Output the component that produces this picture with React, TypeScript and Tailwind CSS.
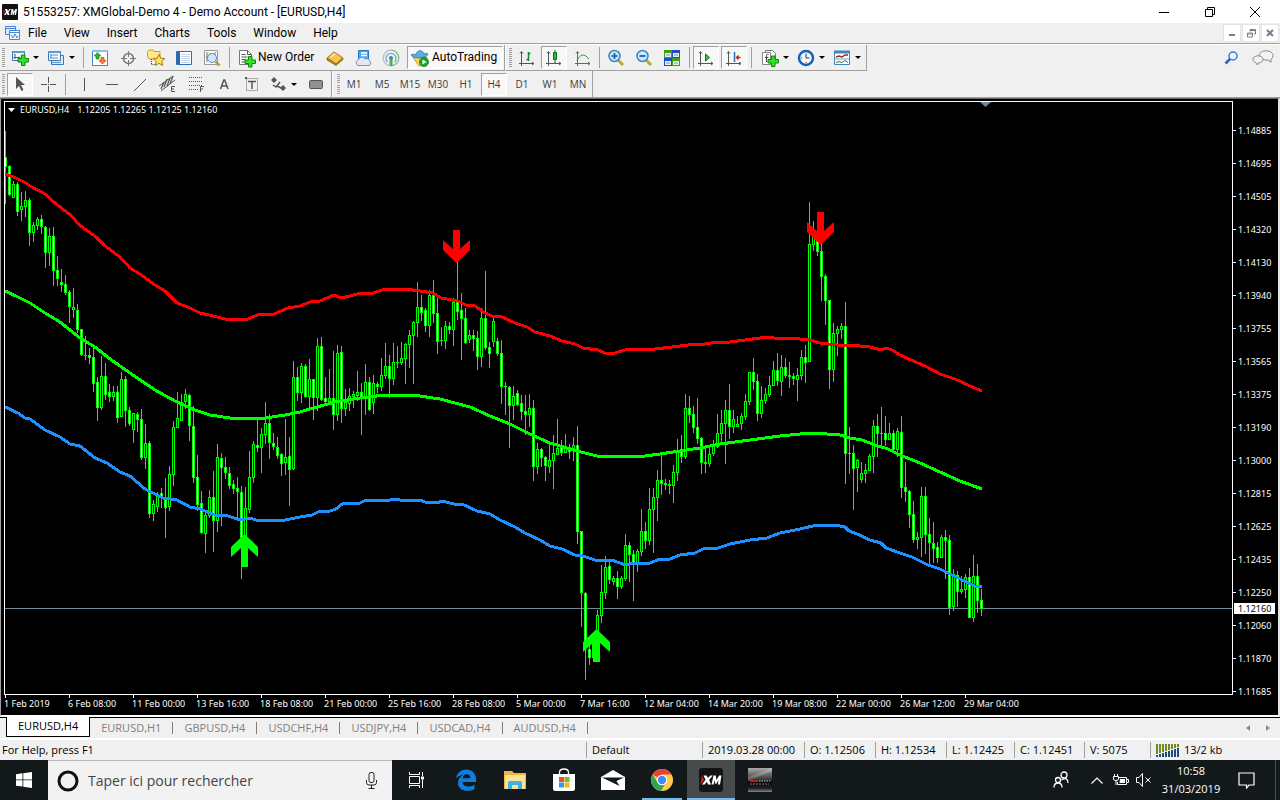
import type { ReactNode } from "react";

type Candle = [high: number, top: number, bottom: number, low: number, bear?: 1];
type Point = [number, number];

// one candle every 4px, starting at x = 5
const candles: Candle[] = [
  [131, 157, 166, 203, 1], [165, 166, 194, 195, 1], [181, 184, 197, 197], [182, 184, 211, 215, 1], [192, 206, 209, 220],
  [191, 200, 206, 216], [198, 200, 232, 245, 1], [222, 225, 232, 241], [217, 219, 225, 229], [215, 219, 226, 233, 1],
  [226, 227, 252, 267, 1], [228, 236, 252, 265], [227, 236, 270, 285, 1], [256, 270, 278, 285, 1], [269, 282, 284, 291, 1],
  [275, 284, 292, 294, 1], [290, 292, 306, 322, 1], [288, 307, 309, 317], [304, 310, 329, 332, 1], [329, 329, 354, 355, 1],
  [336, 355, 355, 359], [348, 355, 357, 363, 1], [346, 357, 383, 391, 1], [377, 382, 407, 420, 1], [356, 376, 407, 409],
  [363, 376, 394, 399, 1], [384, 392, 396, 401, 1], [386, 392, 396, 400], [386, 392, 417, 422, 1], [372, 379, 416, 416],
  [376, 379, 410, 426, 1], [407, 410, 423, 425, 1], [413, 413, 429, 442], [412, 414, 419, 431, 1], [409, 419, 457, 459, 1],
  [424, 443, 457, 468], [441, 443, 513, 517, 1], [500, 504, 513, 520], [492, 494, 506, 511], [488, 493, 497, 507, 1],
  [478, 498, 507, 537, 1], [466, 474, 506, 510], [421, 427, 474, 485], [392, 418, 427, 427], [394, 402, 420, 420],
  [389, 394, 401, 408], [394, 395, 425, 440, 1], [406, 426, 477, 482, 1], [455, 477, 504, 510, 1], [491, 503, 532, 533, 1],
  [510, 515, 533, 552], [490, 497, 515, 517], [471, 497, 520, 551, 1], [444, 457, 520, 531], [453, 458, 467, 525, 1],
  [457, 467, 472, 478, 1], [467, 473, 485, 488, 1], [480, 484, 488, 493, 1], [477, 488, 491, 520, 1], [486, 492, 537, 578, 1],
  [487, 508, 537, 545], [451, 477, 509, 512], [441, 444, 477, 482], [420, 445, 447, 451, 1], [428, 434, 447, 472],
  [402, 423, 434, 443], [414, 423, 442, 458, 1], [433, 443, 446, 449, 1], [437, 447, 455, 458, 1], [453, 454, 463, 475, 1],
  [419, 457, 462, 474], [437, 456, 469, 505, 1], [361, 377, 468, 469], [367, 377, 392, 400, 1], [363, 366, 392, 402],
  [364, 366, 396, 397, 1], [359, 379, 396, 407], [379, 379, 397, 419, 1], [338, 346, 397, 410], [337, 346, 399, 400, 1],
  [377, 398, 401, 405, 1], [369, 398, 401, 401], [351, 398, 414, 429, 1], [345, 353, 414, 420], [346, 352, 408, 422, 1],
  [389, 402, 408, 415], [388, 396, 403, 410], [391, 394, 396, 407], [371, 392, 395, 400], [383, 392, 398, 434, 1],
  [364, 382, 397, 414], [377, 382, 409, 410, 1], [375, 383, 402, 413], [382, 384, 386, 392, 1], [358, 375, 386, 390],
  [343, 366, 375, 378], [355, 366, 378, 397, 1], [343, 362, 378, 384], [346, 362, 362, 367], [342, 358, 362, 364],
  [343, 344, 358, 383], [330, 335, 344, 367], [321, 322, 335, 383], [282, 307, 322, 336], [295, 307, 312, 320, 1],
  [308, 310, 325, 331, 1], [290, 295, 325, 336], [280, 295, 313, 322, 1], [297, 313, 341, 353, 1], [327, 340, 340, 345],
  [321, 326, 340, 348], [322, 326, 329, 333, 1], [298, 302, 329, 345], [262, 302, 311, 319, 1], [293, 310, 318, 359, 1],
  [308, 318, 342, 343, 1], [330, 335, 339, 342], [330, 335, 338, 350, 1], [331, 338, 356, 369, 1], [308, 318, 356, 366],
  [271, 318, 347, 349, 1], [342, 347, 353, 367, 1], [318, 321, 341, 346], [338, 341, 353, 355, 1], [340, 353, 386, 403, 1],
  [382, 386, 386, 414], [386, 387, 405, 447, 1], [386, 396, 405, 419], [390, 393, 404, 405, 1], [395, 403, 411, 419, 1],
  [395, 411, 414, 434, 1], [394, 408, 414, 426], [400, 408, 466, 480, 1], [443, 449, 466, 473], [448, 449, 457, 466, 1],
  [456, 457, 465, 480, 1], [443, 460, 466, 472], [435, 453, 460, 488], [419, 448, 454, 454], [440, 447, 452, 455, 1],
  [434, 447, 452, 452], [444, 447, 451, 458, 1], [437, 445, 450, 460], [426, 445, 531, 543, 1], [531, 531, 592, 626, 1],
  [592, 593, 640, 679, 1], [645, 649, 657, 664, 1], [640, 642, 657, 658], [610, 615, 632, 642], [565, 592, 615, 622],
  [556, 567, 592, 598], [562, 566, 579, 583, 1], [576, 578, 581, 584], [571, 578, 586, 598, 1], [576, 578, 586, 588],
  [534, 545, 578, 580], [542, 545, 554, 581, 1], [550, 554, 563, 600, 1], [549, 551, 563, 571], [509, 531, 551, 555],
  [522, 531, 540, 548, 1], [488, 509, 540, 544], [488, 497, 509, 552], [470, 480, 497, 520], [455, 480, 483, 494, 1],
  [479, 483, 484, 489], [480, 484, 485, 493], [465, 472, 485, 502], [439, 450, 472, 480], [435, 449, 456, 462, 1],
  [394, 408, 456, 458], [396, 408, 414, 422, 1], [406, 414, 427, 432, 1], [398, 427, 438, 443, 1], [437, 438, 462, 473, 1],
  [446, 462, 463, 472], [447, 454, 463, 466], [440, 446, 453, 455], [414, 433, 446, 447], [410, 423, 433, 441],
  [400, 410, 423, 463], [384, 410, 426, 438, 1], [410, 419, 426, 432], [416, 424, 426, 426], [413, 416, 423, 429],
  [394, 401, 416, 419], [372, 372, 401, 404], [358, 372, 381, 389, 1], [374, 381, 413, 420, 1], [386, 400, 413, 417],
  [388, 394, 400, 403], [376, 385, 394, 396], [361, 370, 385, 385], [353, 370, 380, 385, 1], [355, 367, 381, 395],
  [358, 367, 375, 377, 1], [362, 375, 376, 387], [373, 376, 378, 384, 1], [368, 375, 379, 400], [350, 357, 375, 379],
  [345, 357, 362, 382, 1], [202, 244, 361, 361], [221, 237, 244, 250], [232, 241, 251, 255, 1], [240, 251, 276, 300, 1],
  [274, 276, 300, 324, 1], [300, 300, 369, 388, 1], [323, 333, 369, 381], [326, 329, 333, 355], [323, 326, 329, 338],
  [302, 326, 453, 483, 1], [427, 453, 453, 473], [445, 453, 468, 509, 1], [459, 460, 467, 491], [462, 473, 479, 482],
  [464, 470, 473, 482], [454, 456, 470, 470], [420, 426, 456, 472], [414, 426, 433, 456, 1], [407, 433, 433, 447],
  [416, 433, 439, 445, 1], [423, 433, 439, 439], [430, 433, 449, 450, 1], [428, 431, 449, 456], [416, 432, 487, 497, 1],
  [462, 487, 491, 501, 1], [490, 491, 514, 527, 1], [501, 514, 539, 542, 1], [532, 537, 539, 548], [487, 496, 537, 556],
  [487, 496, 534, 553, 1], [518, 534, 542, 564, 1], [522, 543, 548, 562, 1], [542, 547, 557, 562, 1], [535, 537, 557, 557],
  [530, 537, 540, 578, 1], [535, 540, 607, 614, 1], [569, 574, 606, 610], [571, 575, 591, 606, 1], [576, 589, 591, 593],
  [574, 577, 589, 597], [568, 577, 617, 617, 1], [555, 576, 617, 621], [564, 576, 600, 612, 1], [589, 600, 608, 615, 1],
];

const upperBand: Point[] = [
  [5, 174], [16, 178], [26, 183], [30, 186], [45, 194], [55, 203], [73, 217], [78, 224], [96, 237], [105, 246], [120, 257],
  [130, 268], [140, 274], [155, 285], [165, 291], [177, 303], [190, 308], [200, 313], [213, 316], [225, 319], [248, 319],
  [260, 314], [274, 314], [288, 308], [300, 306], [310, 302], [320, 301], [334, 295], [341, 298], [350, 296], [361, 293],
  [370, 294], [385, 289], [400, 290], [405, 289], [420, 291], [433, 293], [441, 298], [458, 301], [466, 305], [475, 306],
  [485, 313], [492, 316], [500, 316], [515, 323], [527, 327], [535, 332], [550, 336], [562, 341], [575, 344], [583, 348],
  [598, 350], [605, 353], [615, 353], [625, 350], [640, 349], [655, 349], [672, 347], [688, 345], [705, 344], [717, 342],
  [730, 342], [745, 340], [768, 337], [780, 339], [790, 338], [810, 340], [820, 343], [845, 346], [850, 345], [870, 347],
  [881, 350], [886, 348], [892, 350], [900, 355], [911, 360], [925, 366], [940, 374], [955, 379], [970, 386], [982, 391],
];
const middleBand: Point[] = [
  [5, 291], [16, 296], [30, 303], [45, 313], [60, 322], [80, 338], [95, 347], [110, 359], [130, 373], [155, 390], [175, 401],
  [195, 410], [210, 415], [230, 418], [250, 419], [265, 418], [285, 415], [300, 412], [310, 409], [335, 402], [360, 398],
  [385, 395], [413, 395], [440, 399], [455, 403], [470, 407], [490, 416], [510, 424], [530, 434], [550, 443], [577, 451],
  [597, 456], [620, 457], [645, 456], [660, 454], [680, 451], [700, 448], [720, 444], [750, 440], [780, 436], [800, 434],
  [814, 433], [840, 435], [850, 438], [862, 440], [875, 445], [888, 449], [900, 455], [920, 463], [940, 472], [960, 481],
  [982, 489],
];
const lowerBand: Point[] = [
  [5, 407], [18, 413], [25, 418], [30, 419], [45, 430], [60, 437], [70, 444], [80, 446], [95, 458], [107, 463], [120, 472],
  [130, 476], [145, 489], [163, 498], [177, 500], [190, 507], [200, 509], [215, 515], [228, 516], [240, 520], [250, 518],
  [259, 521], [285, 520], [300, 517], [312, 515], [320, 511], [330, 511], [336, 509], [342, 504], [360, 503], [366, 500],
  [385, 501], [395, 499], [405, 501], [420, 500], [425, 502], [437, 503], [442, 501], [458, 505], [462, 504], [477, 511],
  [490, 514], [500, 520], [515, 527], [525, 533], [540, 540], [550, 546], [562, 549], [575, 555], [583, 556], [595, 560],
  [612, 560], [625, 565], [635, 563], [642, 564], [650, 563], [660, 559], [670, 559], [680, 555], [695, 553], [703, 549],
  [718, 548], [730, 544], [750, 540], [767, 538], [780, 533], [800, 529], [817, 525], [840, 526], [845, 527], [849, 531],
  [857, 534], [870, 540], [881, 543], [886, 548], [900, 553], [912, 557], [928, 565], [940, 569], [960, 579], [975, 586],
  [982, 587],
];

const prices = [
  "1.14885", "1.14695", "1.14505", "1.14320", "1.14130", "1.13940", "1.13755", "1.13565", "1.13375",
  "1.13190", "1.13000", "1.12815", "1.12625", "1.12435", "1.12250", "1.12060", "1.11870", "1.11685",
];
const times = [
  "1 Feb 2019", "6 Feb 08:00", "11 Feb 00:00", "13 Feb 16:00", "18 Feb 08:00", "21 Feb 00:00", "25 Feb 16:00", "28 Feb 08:00",
  "5 Mar 00:00", "7 Mar 16:00", "12 Mar 04:00", "14 Mar 20:00", "19 Mar 08:00", "22 Mar 00:00", "26 Mar 12:00", "29 Mar 04:00",
];
const menus = ["File", "View", "Insert", "Charts", "Tools", "Window", "Help"];
const timeframes = ["M1", "M5", "M15", "M30", "H1", "H4", "D1", "W1", "MN"];
const tabs = ["EURUSD,H4", "EURUSD,H1", "GBPUSD,H4", "USDCHF,H4", "USDJPY,H4", "USDCAD,H4", "AUDUSD,H4"];

function Svg({ children, size = 20 }: { children: ReactNode; size?: number }) {
  return (
    <svg width={size} height={size} viewBox="0 0 20 20" fill="none" className="shrink-0" aria-hidden="true">
      {children}
    </svg>
  );
}

function Caret() {
  return (
    <svg width="6" height="3" viewBox="0 0 6 3" aria-hidden="true">
      <path d="M0 0h6L3 3z" fill="#000" />
    </svg>
  );
}

function Plus({ x, y }: { x: number; y: number }) {
  return (
    <path
      transform={`translate(${x} ${y})`}
      d="M4 .5h3.500V4H11v3.500H7.500V11H4V7.500H.5V4H4z"
      fill="#35e02c"
      stroke="#078a07"
    />
  );
}

function Tool({ label, pressed, children }: { label: string; pressed?: boolean; children: ReactNode }) {
  return (
    <button aria-label={label} className="flex h-6 w-7 items-center justify-center">
      <span
        className={
          pressed
            ? "flex h-[23px] w-[26px] items-center justify-center border border-t-[#a0a0a0] border-l-[#a0a0a0] border-r-white border-b-white bg-[#f8f8f8]"
            : "flex items-center justify-center"
        }
      >
        {children}
      </span>
    </button>
  );
}

function DropTool({ label, children }: { label: string; children: ReactNode }) {
  return (
    <button aria-label={label} className="flex h-6 w-9 items-center">
      <span className="flex w-6 justify-center">{children}</span>
      <span className="flex w-2 justify-center">
        <Caret />
      </span>
    </button>
  );
}

const Sep = () => (
  <span className="flex h-[21px] w-1.5 justify-center">
    <span className="w-px bg-[#a0a0a0]" />
  </span>
);

const Grip = () => (
  <span className="flex h-5 w-[3px] flex-col justify-between">
    {Array.from({ length: 10 }, (_, i) => (
      <span key={i} className="h-px bg-[#a0a0a0]" />
    ))}
  </span>
);

function TitleBar() {
  return (
    <header className="flex h-[23px] shrink-0 items-center bg-white pl-[2px] font-[Roboto,sans-serif] text-[12px] text-black">
      <svg width="16" height="16" viewBox="0 0 16 16" aria-hidden="true">
        <rect width="16" height="16" rx="1" fill="#111" />
        <path d="M2 11l2-3-1-3h2l1 2 1.500-2H9L6.500 8l1 3h-2l-.7-1.700L3.500 11zM8.500 11l1-6h1.700l.6 3 1.600-3H15l-1 6h-1.300l.5-3.500L11.500 11h-.8L10 7.500 9.700 11z" fill="#fff" />
        <path d="M1 10.500L3 8 2 5.500z" fill="#e11" />
      </svg>
      <h1 className="ml-[5px]">51553257: XMGlobal-Demo 4 - Demo Account - [EURUSD,H4]</h1>
      <div className="ml-auto flex h-full pr-0.5">
        <button aria-label="Minimize" className="flex w-[46px] items-center justify-center">
          <svg width="10" height="10"><path d="M0 5.500h10" stroke="#000" /></svg>
        </button>
        <button aria-label="Restore" className="flex w-[45px] items-center justify-center">
          <svg width="10" height="10" fill="none" stroke="#000"><path d="M.5 2.500h7v7h-7zM2.500 2.500v-2h7v7h-2" /></svg>
        </button>
        <button aria-label="Close" className="flex w-[46px] items-center justify-center">
          <svg width="10" height="10" stroke="#000"><path d="M0 0l10 10M10 0L0 10" /></svg>
        </button>
      </div>
    </header>
  );
}

function MenuBar() {
  return (
    <nav className="flex h-[21px] shrink-0 items-center border-b border-[#a0a0a0] bg-[#f0f0f0] pl-[5px] font-[Roboto,sans-serif] text-[12px] text-black">
      <svg width="15" height="14" viewBox="0 0 15 14" fill="none" stroke="#4a83d8" aria-hidden="true">
        <path d="M.5.5h10v8H.5zM.5 2.500h10" fill="#dfeafc" />
        <path d="M4.500 4.500h10v9h-10z" fill="#f4f8ff" />
        <path d="M4.500 6.500h10M6 9l2 3 2-4 2 4 1-2" />
      </svg>
      <div className="ml-2 flex gap-[17px]">
        {menus.map((m) => (
          <button key={m}>{m}</button>
        ))}
      </div>
      <div className="ml-auto flex gap-px pr-px text-[#708090]">
        <button aria-label="Minimize chart" className="flex h-[18px] w-[18px] items-center justify-center border border-[#e3e3e3] bg-white">
          <svg width="8" height="8"><path d="M1 6h6" stroke="currentColor" strokeWidth="2" /></svg>
        </button>
        <button aria-label="Restore chart" className="flex h-[18px] w-[18px] items-center justify-center border border-[#e3e3e3] bg-white">
          <svg width="9" height="9" fill="none" stroke="currentColor"><path d="M.5 4h5v4h-5zM.5 5h5M3 2.500V.5h5.500v4.500H7M3 1.500h5.500" /></svg>
        </button>
        <button aria-label="Close chart" className="flex h-[18px] w-[18px] items-center justify-center border border-[#e3e3e3] bg-white">
          <svg width="8" height="8"><path d="M1 1l6 6M7 1L1 7" stroke="currentColor" strokeWidth="2" /></svg>
        </button>
      </div>
    </nav>
  );
}

function StandardToolbar() {
  return (
    <div className="flex h-[27px] shrink-0 items-center border-t border-white bg-[#f0f0f0] font-[Roboto,sans-serif] text-[12px] text-black">
      <div className="flex h-full items-center border-r border-b border-[#a0a0a0] pl-0.5">
        <Grip />
        <span className="w-[3px]" />
        <DropTool label="New chart">
          <Svg>
            <path d="M2.500 3.500h12v9h-12z" fill="#f3f8ff" stroke="#3a78b8" />
            <path d="M2.500 3h12v2h-12z" fill="#5a9ad0" />
            <path d="M5 6v5M3.500 9.500h6M5 6l-1 1M9 8.500l1 1-1 1" stroke="#557" />
            <Plus x={7.5} y={6.5} />
          </Svg>
        </DropTool>
        <DropTool label="Profiles">
          <Svg>
            <path d="M5.500 7.500h12v9h-12z" fill="#dcebfb" stroke="#3a78b8" />
            <path d="M2.500 3.500h12v9h-12z" fill="#f3f8ff" stroke="#3a78b8" />
            <path d="M2 3h13v2H2z" fill="#5a9ad0" />
            <path d="M4 7h8M4 10h8M5 6v5M6 14.500h9" stroke="#6b8fb5" />
          </Svg>
        </DropTool>
        <Sep />
        <Tool label="Market Watch">
          <Svg>
            <path d="M2.500 2.500h15v15h-15z" fill="#fff" stroke="#3b8bd0" />
            <path d="M2 3h16" stroke="#8cc0ea" strokeWidth="2" />
            <path d="M4 8l3.500-3.500L11 8H9v3H6V8z" fill="#2fb52f" stroke="#117a11" strokeWidth=".6" />
            <path d="M9 12.500l3.500 3.500 3.500-3.500-2-.2V9.500h-3v2.800z" fill="#ff7b38" stroke="#c13900" strokeWidth=".7" />
          </Svg>
        </Tool>
        <Tool label="Data Window">
          <Svg>
            <circle cx="10.500" cy="10.500" r="5" stroke="#777" strokeWidth="1.500" />
            <path d="M10.500 3v6M10.500 12v6M3 10.500h6M12 10.500h6" stroke="#777" />
          </Svg>
        </Tool>
        <Tool label="Navigator">
          <Svg>
            <path d="M1.500 8V3.500L3 2h4l1 1.500h6V11H3z" fill="#ffe78a" stroke="#cf9f1c" />
            <path d="M5.500 11v6M5.500 16.500h3" stroke="#444" strokeDasharray="1 1" />
            <path d="M13 6.500l1.700 3.700 4.100.4-3 2.800.9 4.100-3.700-2.100-3.700 2.100.9-4.100-3-2.800 4.100-.4z" fill="#ffe25c" stroke="#a9791b" />
          </Svg>
        </Tool>
        <Tool label="Terminal">
          <Svg>
            <path d="M2.500 3.500h15v13h-15z" fill="#fff" stroke="#2870b4" />
            <path d="M4.500 4v12" stroke="#2f65b0" strokeWidth="3" />
            <path d="M7 6.500h9M7 8.500h9M7 10.500h9M7 12.500h9M7 14.500h9" stroke="#c3d6ec" />
          </Svg>
        </Tool>
        <Tool label="Strategy Tester">
          <Svg>
            <path d="M2.500 2.500h13v14h-13z" fill="#fafafa" stroke="#999" />
            <path d="M5 4v10M8 5v3M13 4v4M4 9h3" stroke="#777" />
            <circle cx="10" cy="10" r="4.500" fill="#cbe6fb" fillOpacity=".85" stroke="#5794cc" />
            <path d="M13.500 13.500l4 4" stroke="#c99824" strokeWidth="2.500" />
          </Svg>
        </Tool>
        <Sep />
        <button className="ml-1 flex w-[85px] items-center gap-0.5">
          <Svg>
            <path d="M3.500 2.500h8l4 4v10h-12z" fill="#fff" stroke="#777" />
            <path d="M11.500 2.500v4h4M5.500 6.500h4M5.500 9h6M5.500 11.500h4M5.500 14h4" stroke="#555" />
            <Plus x={8.5} y={8} />
          </Svg>
          <span className="-mt-px whitespace-nowrap">New Order</span>
        </button>
        <Tool label="MetaEditor">
          <Svg>
            <path d="M2 10l7-6 9 6-7 6z" fill="#f3c64f" stroke="#a87314" />
            <path d="M2 10v2l9 5.500 7-6V10l-7 6z" fill="#c28a20" stroke="#8a5c0c" strokeWidth=".7" />
            <path d="M6 9l4-3.500" stroke="#fff0b0" strokeWidth="1.500" />
          </Svg>
        </Tool>
        <Tool label="Virtual hosting">
          <Svg>
            <path d="M5.500 2.500h10v10h-10z" fill="#4ba8ee" stroke="#2476bd" />
            <path d="M8 5h6M8 7.500h6" stroke="#fff" strokeWidth="1.500" />
            <path d="M5 17.500a3 3 0 010-5.500 4 4 0 017-1 3.500 3.500 0 015 3c1.500 1 .5 3.500-1 3.500z" fill="#dfe9f5" stroke="#7d96b5" />
          </Svg>
        </Tool>
        <Tool label="Signals">
          <Svg>
            <path d="M10 2.200a7.800 7.800 0 110 15.600" stroke="#7fc08a" strokeWidth="1.300" />
            <path d="M10 17.800a7.800 7.800 0 010-15.600" stroke="#b3c1d2" strokeWidth="1.300" />
            <path d="M6.500 14a5 5 0 117 0" stroke="#7aa3c6" strokeWidth="1.300" />
            <path d="M8.500 11.500h3V18h-3z" fill="#4fb04f" />
            <circle cx="10" cy="10" r="2" fill="#2f8fa8" />
          </Svg>
        </Tool>
        <button className="ml-0.5 flex h-[23px] w-[96px] items-center gap-0.5 border border-t-[#a0a0a0] border-l-[#a0a0a0] border-r-white border-b-white bg-[#f8f8f8] pl-0.5">
          <Svg>
            <path d="M3 9l6 9 7-2 1-7z" fill="#ffd34d" stroke="#b98a1c" strokeWidth=".8" />
            <path d="M1 7c2 4 15 4 17-1-1-1-3-.5-4 0-.5-4-7-5-8 .5C4 6 2 6 1 7z" fill="#5aaee0" stroke="#2c78ad" strokeWidth=".8" />
            <circle cx="14" cy="14" r="4.500" fill="#1ea52a" stroke="#0b6f15" strokeWidth=".7" />
            <path d="M12.500 11.500v5l4-2.500z" fill="#fff" />
          </Svg>
          <span className="-mt-px">AutoTrading</span>
        </button>
        <span className="w-px" />
      </div>
      <div className="flex h-full items-center border-r border-b border-l border-l-white border-r-[#a0a0a0] border-b-[#a0a0a0] pl-[3px]">
        <Grip />
        <Tool label="Bar chart">
          <Svg>
            <path d="M5.500 4v14M3 15.500h15M4 5.500l1.500-2 1.500 2M16 14l2 1.500-2 1.500" stroke="#555" />
            <path d="M12.500 4v9M10.500 11.500h2M12.500 5.500h2" stroke="#15862a" strokeWidth="1.500" />
          </Svg>
        </Tool>
        <Tool label="Candlesticks" pressed>
          <Svg>
            <path d="M4.500 4v14M2 15.500h15M3 5.500l1.500-2 1.500 2M15 14l2 1.500-2 1.500" stroke="#555" />
            <path d="M11 2v13" stroke="#0a6a12" />
            <path d="M9.500 4.500h3v7h-3z" fill="#22c32e" stroke="#0a6a12" />
          </Svg>
        </Tool>
        <Tool label="Line chart">
          <Svg>
            <path d="M5.500 4v14M3 15.500h15M4 5.500l1.500-2 1.500 2M16 14l2 1.500-2 1.500" stroke="#666" />
            <path d="M5 13c3-7 7-8 12-2" stroke="#2c9a3c" />
          </Svg>
        </Tool>
        <Sep />
        <Tool label="Zoom in">
          <Svg>
            <path d="M12 12l5 5" stroke="#c9a227" strokeWidth="3" />
            <circle cx="8.500" cy="8" r="5.500" fill="#cfe9fc" stroke="#3885c2" strokeWidth="1.500" />
            <path d="M5.500 8h6M8.500 5v6" stroke="#2a72b5" strokeWidth="2" />
          </Svg>
        </Tool>
        <Tool label="Zoom out">
          <Svg>
            <path d="M12 12l5 5" stroke="#c9a227" strokeWidth="3" />
            <circle cx="8.500" cy="8" r="5.500" fill="#cfe9fc" stroke="#3885c2" strokeWidth="1.500" />
            <path d="M5.500 8h6" stroke="#2a72b5" strokeWidth="2" />
          </Svg>
        </Tool>
        <Tool label="Tile windows">
          <Svg>
            <path d="M2 2h8v8H2z" fill="#3f9c14" />
            <path d="M10 2h8v8h-8z" fill="#1d4fc4" />
            <path d="M2 10h8v8H2z" fill="#1d4fc4" />
            <path d="M10 10h8v8h-8z" fill="#3f9c14" />
            <path d="M3 5h6v4H3zM11 5h6v4h-6zM3 13h6v4H3zM11 13h6v4h-6z" fill="#e6f1e6" />
            <path d="M4 7h4M12 7h4M4 15h4M12 15h4" stroke="#6e9ad0" />
          </Svg>
        </Tool>
        <Sep />
        <Tool label="Auto scroll" pressed>
          <Svg>
            <path d="M4.500 4v14M2 15.500h15M3 5.500l1.500-2 1.500 2M15 14l2 1.500-2 1.500" stroke="#555" />
            <path d="M9.500 6v7l4-3.500z" fill="#35c63f" stroke="#0d7a18" />
          </Svg>
        </Tool>
        <Tool label="Chart shift" pressed>
          <Svg>
            <path d="M4.500 4v14M2 15.500h15M3 5.500l1.500-2 1.500 2M15 14l2 1.500-2 1.500" stroke="#555" />
            <path d="M10.500 4v10" stroke="#2a6db0" strokeWidth="1.500" />
            <path d="M12 9.500h4.500M14.500 7.500l-2 2 2 2" stroke="#b33510" strokeWidth="1.500" />
          </Svg>
        </Tool>
        <Sep />
        <span className="w-1" />
        <DropTool label="Indicators">
          <Svg>
            <path d="M5.500 2.500h7l3 3v9h-10z" fill="#fff" stroke="#777" />
            <path d="M2.500 4.500h8v12h-8z" fill="#fff" stroke="#888" />
            <path d="M8.500 6.500c-2-1-2 1-2 2.500V14M5 9.500h3.500" stroke="#444" />
            <Plus x={7.5} y={7.5} />
          </Svg>
        </DropTool>
        <DropTool label="Periods">
          <Svg>
            <circle cx="10" cy="10" r="7" fill="#f2f8ff" stroke="#1663b6" strokeWidth="2.500" />
            <path d="M10 5.500V10h3.500M10 14v1M5 10h1" stroke="#333" />
          </Svg>
        </DropTool>
        <DropTool label="Templates">
          <Svg>
            <path d="M2.500 3.500h15v13h-15z" fill="#fff" stroke="#3d85c2" />
            <path d="M2 4h16" stroke="#3d85c2" strokeWidth="3" />
            <path d="M2.500 11h15" stroke="#6aa2d2" />
            <path d="M4 9l3-1 3 1 3-2h3" stroke="#9c2a17" strokeWidth="1.500" />
            <path d="M4 14.500l3-1 3 1 3-2 3 2" stroke="#218430" />
          </Svg>
        </DropTool>
      </div>
      <div className="ml-auto flex items-center gap-3.5 pr-1.5">
        <button aria-label="Search">
          <svg width="14" height="14" viewBox="0 0 14 14" fill="none" aria-hidden="true">
            <circle cx="9" cy="5" r="4" stroke="#3b78d8" strokeWidth="1.500" fill="#eef5ff" />
            <path d="M6 8l-4.500 4.500" stroke="#2862c8" strokeWidth="2.500" />
          </svg>
        </button>
        <button aria-label="Community">
          <svg width="22" height="16" viewBox="0 0 22 16" fill="#f3f3f7" stroke="#888" aria-hidden="true">
            <path d="M14 .8c4 0 7 2 7 4.700 0 2-1 3-2 3.700v3L16 10c-5 .5-8.500-2-8.500-4.700C7.500 2.500 10.500.8 14 .8z" />
            <path d="M6 5.800c3 0 5 1.500 5 3.700S9 13 6 13l-.5 2-2-2.500C2 12 1 11 1 9.500 1 7.300 3 5.800 6 5.800z" />
          </svg>
        </button>
      </div>
    </div>
  );
}

function DrawingToolbar() {
  return (
    <div className="flex h-[27px] shrink-0 items-center border-b border-[#a0a0a0] bg-[#f0f0f0]">
      <div className="flex h-full items-center border-r border-[#a0a0a0] pl-0.5">
        <Grip />
        <span className="w-px" />
        <Tool label="Cursor" pressed>
          <Svg>
            <path d="M6 3v12l3-3 2.500 5 2-1-2.500-5h4z" fill="#555" />
          </Svg>
        </Tool>
        <Tool label="Crosshair">
          <Svg>
            <path d="M10.500 3v6M10.500 12v6M3 10.500h6M12 10.500h6M10 10.500h1" stroke="#555" />
          </Svg>
        </Tool>
        <Sep />
        <span className="w-0.5" />
        <Tool label="Vertical line"><Svg><path d="M10.500 4v13" stroke="#555" /></Svg></Tool>
        <Tool label="Horizontal line"><Svg><path d="M4 10.500h12" stroke="#555" /></Svg></Tool>
        <Tool label="Trendline"><Svg><path d="M4 17L16 5" stroke="#555" /></Svg></Tool>
        <Tool label="Equidistant channel">
          <Svg>
            <path d="M1 12L15 2M3 17L17 6" stroke="#555" />
            <path d="M3 15L6 8M6 13l3-8M9 12l3-8M12 10l3-8" stroke="#555" strokeWidth="1.300" />
            <path d="M17 12.500h-3.500v5H17M13.500 15H16" stroke="#555" />
          </Svg>
        </Tool>
        <Tool label="Fibonacci retracement">
          <Svg>
            <path d="M3 3.500h13M3 7.500h13M3 11.500h13M3 15.500h9" stroke="#555" strokeDasharray="1 1" />
            <path d="M14.500 18v-5.500H18M14.500 15H17" stroke="#555" />
          </Svg>
        </Tool>
        <Tool label="Text">
          <Svg>
            <path d="M6.500 15L9.800 6h.9L14 15M7.800 12h4.900" stroke="#555" strokeWidth="1.500" />
          </Svg>
        </Tool>
        <Tool label="Text label">
          <Svg>
            <path d="M4.500 4.500h11v12h-11z" stroke="#666" strokeDasharray="1 1" />
            <path d="M3 3h2v2H3z" fill="#555" />
            <path d="M6 7.500h8M10 7.500V15" stroke="#555" strokeWidth="1.500" />
          </Svg>
        </Tool>
        <DropTool label="Arrows">
          <Svg>
            <path d="M3 6l3-3 3 3-3 3zM12 14l3-3 3 3-3 3z" fill="#555" />
            <path d="M5 11l3 2 4-5M9 12l4 2" stroke="#555" strokeWidth="1.500" />
          </Svg>
        </DropTool>
        <Tool label="Shapes">
          <Svg><rect x="3.500" y="6.500" width="13" height="8" rx="1" fill="#909090" stroke="#555" /></Svg>
        </Tool>
        <span className="w-px" />
      </div>
      <div className="flex h-full items-center border-r border-l border-l-white border-r-[#a0a0a0] pl-1 text-[10px] text-[#3c3c3c]">
        <Grip />
        {timeframes.map((t) => (
          <Tool key={t} label={t} pressed={t === "H4"}>{t}</Tool>
        ))}
      </div>
    </div>
  );
}

function Band({ points, color }: { points: Point[]; color: string }) {
  return (
    <polyline points={points.join(" ")} fill="none" stroke={color} strokeWidth="3" strokeLinejoin="round" shapeRendering="crispEdges" />
  );
}

function Plot() {
  return (
    <svg className="block h-full w-full" role="img" aria-label="EURUSD H4 candlestick chart">
      <g transform="translate(-5 -102)">
        <rect x="5" y="608" width="100%" height="1" fill="#778899" />
        <g shapeRendering="crispEdges">
          {candles.map(([high, top, bottom, low, bear], i) => {
            const x = 5 + i * 4;
            return (
              <g key={i}>
                <rect x={x} y={high} width="1" height={low - high + 1} fill="#0f0" />
                <rect x={x - 1} y={top} width="3" height={bottom - top + 1} fill="#0f0" />
                {bottom - top > 1 && (
                  <rect x={x} y={top + 1} width="1" height={bottom - top - 1} fill={bear ? "#fff" : "#000"} />
                )}
              </g>
            );
          })}
        </g>
        <Band points={upperBand} color="#f00" />
        <Band points={middleBand} color="#0f0" />
        <Band points={lowerBand} color="#1e90ff" />
        <path d="M241 567v-19l-10 9v-10l13.500-13L258 547v10l-10-9v19z" fill="#0f0" />
        <path d="M593 662v-19l-10 9v-10l13.500-13L610 642v10l-10-9v19z" fill="#0f0" />
        <path d="M453 230v19l-10-9v10l13.500 13L470 250v-10l-10 9v-19z" fill="#f00" />
        <path d="M817 212v19l-10-9v10l13.500 13L834 232v-10l-10 9v-19z" fill="#f00" />
        <path d="M980 102h11l-5.500 5z" fill="#778899" />
      </g>
    </svg>
  );
}

function ChartWindow() {
  return (
    <main className="flex min-h-0 flex-1 flex-col border-t border-r-2 border-b-2 border-l border-t-[#696969] border-r-[#e3e3e3] border-b-white border-l-[#a0a0a0] bg-black pt-0.5 pl-[3px] font-['Noto_Sans',sans-serif] text-[9px] leading-[11px] text-white">
      <div className="flex min-h-0 flex-1">
        <div className="relative min-w-0 flex-1 overflow-hidden border border-white">
          <Plot />
          <div className="absolute top-0.5 left-[3px] flex items-center">
            <svg width="7" height="4" aria-hidden="true"><path d="M0 0h7L3.500 4z" fill="#fff" /></svg>
            <span className="ml-[5px]">EURUSD,H4</span>
            <span className="ml-2">1.12205 1.12265 1.12125 1.12160</span>
          </div>
        </div>
        <div className="relative w-[45px] pt-[13px]">
          {prices.map((p) => (
            <div key={p} className="flex h-[33px] items-center">
              <span className="h-px w-[3px] bg-white" />
              <span className="ml-0.5">{p}</span>
            </div>
          ))}
          <div className="absolute top-[502px] left-px w-[41px] bg-white pl-1 text-black">1.12160</div>
        </div>
      </div>
      <div className="flex h-5 overflow-hidden">
        {times.map((t) => (
          <div key={t} className="w-16 shrink-0 whitespace-nowrap">
            <div className="ml-px h-[3px] w-px bg-white" />
            <div>{t}</div>
          </div>
        ))}
      </div>
    </main>
  );
}

function ChartTabs() {
  return (
    <div className="flex h-[21px] shrink-0 border-t border-black bg-[#f0f0f0] pl-[6px] text-[11px] text-[#808080]">
      {tabs.map((t, i) =>
        i === 0 ? (
          <button key={t} className="-mt-px h-5 border border-t-0 border-black bg-white px-[11px] text-black">{t}</button>
        ) : (
          <button key={t} className="flex h-5 items-center gap-[11px] pl-[11px]">
            <span>{t}</span>
            <span className="h-3 w-px bg-[#808080]" />
          </button>
        )
      )}
      <div className="ml-auto flex items-center gap-4 pr-2.5">
        <button aria-label="Scroll left"><svg width="4" height="6"><path d="M4 0v6L0 3z" fill="#888" /></svg></button>
        <button aria-label="Scroll right"><svg width="4" height="6"><path d="M0 0v6l4-3z" fill="#888" /></svg></button>
      </div>
    </div>
  );
}

function StatusBar() {
  return (
    <footer className="flex h-[22px] shrink-0 items-center border-t-2 border-white bg-[#f0f0f0] text-[11px] text-black">
      <span className="flex-1 pl-0.5">For Help, press F1</span>
      <span className="w-[116px] border-l border-[#a0a0a0] pl-[5px]">Default</span>
      <span className="w-[102px] border-l border-[#a0a0a0] pl-[5px]">2019.03.28 00:00</span>
      <span className="w-[71px] border-l border-[#a0a0a0] pl-[5px]">O: 1.12506</span>
      <span className="w-[71px] border-l border-[#a0a0a0] pl-[5px]">H: 1.12534</span>
      <span className="w-[68px] border-l border-[#a0a0a0] pl-[5px]">L: 1.12425</span>
      <span className="w-[70px] border-l border-[#a0a0a0] pl-[5px]">C: 1.12451</span>
      <span className="w-[66px] border-l border-[#a0a0a0] pl-[5px]">V: 5075</span>
      <span className="flex w-[130px] items-center gap-1 border-l border-[#a0a0a0] pl-[5px]">
        <svg width="24" height="13" aria-hidden="true">
          {[10, 9, 8, 7, 6, 5, 4, 3].map((h, i) => (
            <g key={i}>
              <rect x={i * 3} y="0" width="2" height={h} fill="#6f8a1a" />
              <rect x={i * 3} y={h + 1} width="2" height={12 - h} fill="#1d4c78" />
            </g>
          ))}
        </svg>
        13/2 kb
      </span>
    </footer>
  );
}

function TaskButton({ label, state, children }: { label: string; state?: "open" | "active"; children: ReactNode }) {
  return (
    <button
      aria-label={label}
      className={state === "active" ? "relative flex w-12 items-center justify-center bg-[#484b4c]" : "relative flex w-12 items-center justify-center"}
    >
      {children}
      {state && <span className={state === "active" ? "absolute bottom-0 h-0.5 w-12 bg-[#76b9ed]" : "absolute bottom-0 h-0.5 w-10 bg-[#76b9ed]"} />}
    </button>
  );
}

function Taskbar() {
  return (
    <div className="flex h-10 shrink-0 bg-[#13191b] text-white">
      <button aria-label="Start" className="flex w-12 items-center justify-center">
        <svg width="16" height="16" viewBox="0 0 16 16" fill="#fff" aria-hidden="true">
          <path d="M0 2.200L6.500 1.300v6.200H0zM7.300 1.200L16 0v7.500H7.300zM0 8.300h6.500v6.300L0 13.700zM7.300 8.300H16V16l-8.700-1.200z" />
        </svg>
      </button>
      <label className="mr-px flex w-[344px] items-center border-t border-[#b9b9b9] bg-[#f2f2f2] pr-3.5 pl-[9px]">
        <svg width="22" height="22" viewBox="0 0 22 22" fill="none" aria-hidden="true">
          <circle cx="11" cy="11" r="9" stroke="#111" strokeWidth="3" />
        </svg>
        <input
          aria-label="Taper ici pour rechercher"
          placeholder="Taper ici pour rechercher"
          className="ml-[9px] min-w-0 flex-1 bg-transparent text-[14px] text-black outline-none placeholder:text-[#444]"
        />
        <svg width="13" height="17" viewBox="0 0 13 17" fill="none" stroke="#222" aria-hidden="true">
          <rect x="4" y=".5" width="5" height="10" rx="2" />
          <path d="M1.500 8v2.500q0 2.500 2.500 2.500h5q2.500 0 2.500-2.500V8M6.500 13v3M3.500 16.500h6" />
        </svg>
      </label>
      <div className="flex gap-px">
        <TaskButton label="Task view">
          <svg width="16" height="16" viewBox="0 0 16 16" fill="none" stroke="#fff" aria-hidden="true">
            <path d="M.5 4.500h10v7H.5zM.5 0v2.500h10V0M.5 16v-2.500h10V16M13.500 0v4M13.500 8v8" />
            <path d="M12 4.500h3v3h-3z" fill="#fff" stroke="none" />
          </svg>
        </TaskButton>
        <TaskButton label="Edge">
          <svg width="22" height="22" viewBox="0 0 22 22" fill="#0f7ddb" aria-hidden="true">
            <path d="M1 9.500C2 3.500 6.500.5 11.500.5 17.500.5 21 5 21 10v3H7.500c.2 3 3 4.500 6 4.500 2.500 0 4.500-.7 6-1.700v4.500c-2 1-4.500 1.500-7 1.500C6.500 21.800 3 18.500 3 14c0-3.800 2.200-6.700 5.500-8.200C5.500 6 2.500 7.500 1 9.500zM7.600 9.300h7.800c0-2.500-1.300-4-3.600-4-2.400 0-3.900 1.700-4.200 4z" />
          </svg>
        </TaskButton>
        <TaskButton label="File Explorer">
          <svg width="22" height="18" viewBox="0 0 22 18" aria-hidden="true">
            <path d="M0 0h8l2 2h12v16H0z" fill="#e9b64a" />
            <path d="M1 4h20v14H1z" fill="#fde293" />
            <path d="M4 18v-6q0-2 2-2h10q2 0 2 2v6h-4v-4H8v4z" fill="#3fb0e8" />
          </svg>
        </TaskButton>
        <TaskButton label="Store">
          <svg width="24" height="24" viewBox="0 0 24 24" aria-hidden="true">
            <path d="M7.500 7V4.500Q7.500 1 12 1t4.500 3.500V7" fill="none" stroke="#fff" strokeWidth="1.300" />
            <path d="M1 6h22v14.500q0 2.500-2.500 2.500h-17Q1 23 1 20.500z" fill="#fff" />
            <path d="M7 9h5v5H7z" fill="#f05123" />
            <path d="M12.500 9h5v5h-5z" fill="#7fb928" />
            <path d="M7 14.500h5v5H7z" fill="#26a3e8" />
            <path d="M12.500 14.500h5v5h-5z" fill="#fcb614" />
          </svg>
        </TaskButton>
        <TaskButton label="Mail">
          <svg width="24" height="20" viewBox="0 0 24 20" aria-hidden="true">
            <path d="M0 7l12-7 12 7v13H0z" fill="#fff" />
            <path d="M1 7.500h22l-7.500 3.500 3 5z" fill="#13191b" />
          </svg>
        </TaskButton>
        <TaskButton label="Chrome" state="open">
          <svg width="22" height="22" viewBox="0 0 22 22" aria-hidden="true">
            <circle cx="11" cy="11" r="11" fill="#ffcd46" />
            <path d="M11 11L1.500 5.500A11 11 0 0120.500 5.500H11z" fill="#e5443a" />
            <path d="M1.500 5.500a11 11 0 008.500 16.400L15.300 13 11 11 6.500 13z" fill="#33a455" />
            <circle cx="11" cy="11" r="5.300" fill="#fff" />
            <circle cx="11" cy="11" r="4.200" fill="#4587f3" />
          </svg>
        </TaskButton>
        <TaskButton label="XM" state="active">
          <svg width="24" height="24" viewBox="0 0 24 24" aria-hidden="true">
            <rect width="24" height="24" rx="3" fill="#141414" />
            <path d="M3 16.500l3.500-4.700L4.500 7.500h3L9 10l2.200-2.500h2.600l-3.700 4.400 1.900 4.600h-3l-1.100-2.700-2.200 2.700zM12.500 16.500l2-9h2.300l.6 4.500 2.700-4.500H22.500l-1.500 9h-2.200l.8-4.500-2.300 3.700h-1.200l-.6-3.700-.9 4.500z" fill="#fff" />
            <path d="M1.500 16.500L5 12 3 7.500z" fill="#e31b1b" />
          </svg>
        </TaskButton>
        <TaskButton label="PortFonds">
          <svg width="24" height="24" viewBox="0 0 24 24" aria-hidden="true">
            <defs>
              <linearGradient id="pf" x1="0" y1="0" x2="0" y2="1">
                <stop offset="0" stopColor="#aaa" />
                <stop offset=".5" stopColor="#333" />
                <stop offset=".6" stopColor="#050505" />
                <stop offset=".85" stopColor="#222" />
                <stop offset="1" stopColor="#888" />
              </linearGradient>
            </defs>
            <rect width="24" height="24" fill="url(#pf)" />
            <path d="M0 9L24 0v3L0 13z" fill="#fff" fillOpacity=".2" />
            <path d="M2 13h8" stroke="#c31818" strokeWidth="2" />
            <path d="M11 13h11" stroke="#bbb" strokeDasharray="1.500 1" />
            <path d="M2 16h19" stroke="#aaa" strokeWidth=".7" strokeDasharray="2 1" />
          </svg>
        </TaskButton>
      </div>
      <div className="ml-auto flex items-center">
        <button aria-label="People" className="mr-[22px]">
          <svg width="16" height="18" viewBox="0 0 16 18" fill="none" stroke="#fff" strokeWidth="1.300" aria-hidden="true">
            <circle cx="11" cy="4" r="3" />
            <circle cx="5" cy="9" r="2.500" />
            <path d="M1 16.500q0-4.500 4-4.500t4 4.500M8.500 8.800Q15 5.500 15 12" />
          </svg>
        </button>
        <button aria-label="Show hidden icons" className="mr-2.5">
          <svg width="12" height="7" viewBox="0 0 12 7" fill="none" stroke="#fff" strokeWidth="1.200" aria-hidden="true"><path d="M.5 6.500L6 1l5.500 5.500" /></svg>
        </button>
        <button aria-label="Battery" className="mr-[7px]">
          <svg width="16" height="12" viewBox="0 0 16 12" fill="none" stroke="#fff" aria-hidden="true">
            <path d="M5.500 3.500h8v7h-9V8M14 5.500h1.500v3H14M1.500 0v2M4.500 0v2M.5 2.500h5V5Q5.500 6.500 3 6.500T.5 5zM3 6.500V11" />
            <path d="M7 5h5v4H6.500z" fill="#fff" stroke="none" />
          </svg>
        </button>
        <button aria-label="Volume" className="mr-2">
          <svg width="16" height="14" viewBox="0 0 16 14" fill="none" stroke="#fff" aria-hidden="true">
            <path d="M.5 4.500H3l3.500-4v13l-3.500-4H.5zM9.500 4.500l5 5M14.500 4.500l-5 5" />
          </svg>
        </button>
        <div className="w-[62px] text-center text-[11px] leading-[18px]">
          <div>10:58</div>
          <div>31/03/2019</div>
        </div>
        <button aria-label="Notifications" className="ml-4">
          <svg width="17" height="17" viewBox="0 0 17 17" fill="none" stroke="#fff" strokeWidth="1.200" aria-hidden="true">
            <path d="M1 1h15v12h-5l-2.500 3V13H1z" />
          </svg>
        </button>
        <span className="mr-1 ml-5 h-10 w-px bg-[#4b5052]" />
      </div>
    </div>
  );
}

export default function App() {
  return (
    <div className="flex h-screen flex-col overflow-hidden bg-[#f0f0f0] font-['Open_Sans','Noto_Sans',sans-serif]">
      <TitleBar />
      <MenuBar />
      <StandardToolbar />
      <DrawingToolbar />
      <ChartWindow />
      <ChartTabs />
      <StatusBar />
      <Taskbar />
    </div>
  );
}
